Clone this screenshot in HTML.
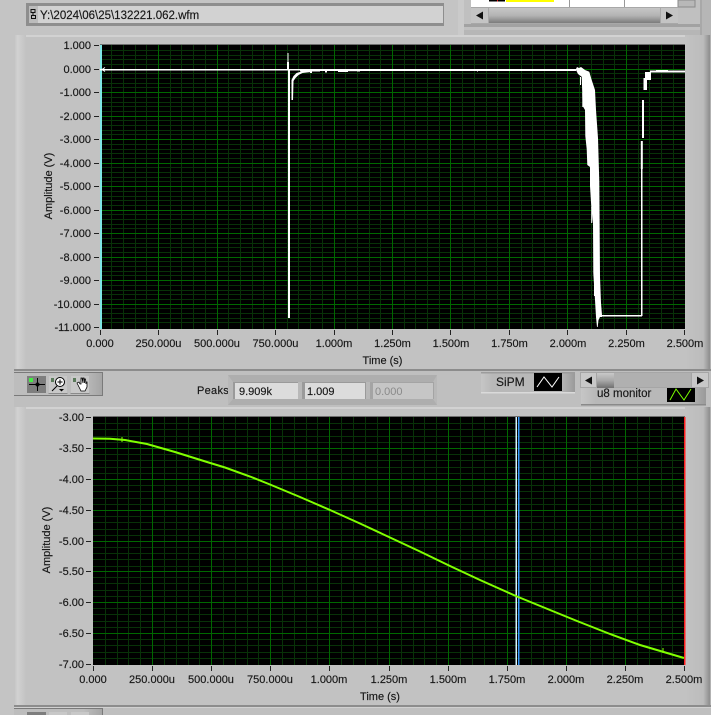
<!DOCTYPE html>
<html lang="en"><head><meta charset="utf-8"><title>Waveform viewer</title>
<style>
html,body{margin:0;padding:0;background:#c4c4c4;width:711px;height:715px;overflow:hidden}
svg{display:block;position:absolute;left:0;top:0}
text{font-family:"Liberation Sans",sans-serif;font-size:11px;fill:#161616;stroke:#161616;stroke-width:.15px}
.y{text-anchor:end}.x{text-anchor:middle}
</style></head><body>
<svg width="711" height="715" viewBox="0 0 711 715" xmlns="http://www.w3.org/2000/svg">
<defs>
<linearGradient id="lf" x1="0" x2="1" y1="0" y2="0"><stop offset="0" stop-color="#c2c2c2"/><stop offset=".3" stop-color="#d2d2d2"/><stop offset="1" stop-color="#c2c2c2"/></linearGradient>
<linearGradient id="rf" x1="0" x2="1" y1="0" y2="0"><stop offset="0" stop-color="#c2c2c2"/><stop offset=".7" stop-color="#bcbcbc"/><stop offset=".95" stop-color="#8e8e8e"/><stop offset="1" stop-color="#c8c8c8"/></linearGradient>
<linearGradient id="sb" x1="0" x2="0" y1="0" y2="1"><stop offset="0" stop-color="#c6c6c6"/><stop offset=".5" stop-color="#b4b4b4"/><stop offset="1" stop-color="#7c7c7c"/></linearGradient>
<linearGradient id="th" x1="0" x2="0" y1="0" y2="1"><stop offset="0" stop-color="#c8c8c8"/><stop offset=".5" stop-color="#a8a8a8"/><stop offset="1" stop-color="#707070"/></linearGradient>
<linearGradient id="tb" x1="0" x2="1" y1="0" y2="0"><stop offset="0" stop-color="#bdbdbd"/><stop offset=".78" stop-color="#bdbdbd"/><stop offset="1" stop-color="#a4a4a4"/></linearGradient>
<linearGradient id="lg" x1="0" x2="1" y1="0" y2="0"><stop offset="0" stop-color="#c6c6c6"/><stop offset=".12" stop-color="#b8b8b8"/><stop offset=".85" stop-color="#b8b8b8"/><stop offset="1" stop-color="#9a9a9a"/></linearGradient>
</defs>
<rect width="711" height="715" fill="#c4c4c4"/>

<!-- top path control -->
<rect x="26" y="3" width="418" height="23" fill="#8e8e8e"/>
<rect x="29" y="6" width="9" height="17" fill="#bcbcbc"/>
<rect x="38" y="6" width="405" height="17" fill="#d2d2d2"/>
<path d="M31 9.500h4v3h-4zM33 12.500v3M31.500 15.500h4v3h-4z" fill="none" stroke="#111" stroke-width="1"/>
<text x="40" y="19" style="font-size:11.5px">Y:\2024\06\25\132221.062.wfm</text>

<!-- top-right table cluster -->
<rect x="458" y="0" width="253" height="36" fill="#b6b6b6"/>
<rect x="458" y="0" width="6" height="36" fill="#cacaca"/>
<rect x="464" y="0" width="236" height="30" fill="#c0c0c0"/>
<rect x="464" y="24" width="236" height="3" fill="#a2a2a2"/>
<rect x="471" y="0" width="207" height="7" fill="#fff"/>
<rect x="489" y="0" width="16" height="1.500" fill="#000"/>
<rect x="497" y="0" width="1" height="1.500" fill="#e01010"/>
<rect x="506" y="0" width="48" height="2" fill="#ffff00"/>
<path d="M569.500 0v7M624.500 0v7" stroke="#999" stroke-width="1"/>
<rect x="678" y="0" width="17" height="7" fill="#b8b8b8" stroke="#8a8a8a"/>
<rect x="471" y="7" width="207" height="17" fill="#a8a8a8"/>
<rect x="471" y="8" width="17" height="15" fill="#c4c4c4"/>
<rect x="489" y="8" width="171" height="15" fill="url(#sb)"/>
<rect x="661" y="8" width="17" height="15" fill="#c4c4c4"/>
<path d="M476 15.500l7-4v8zM673 15.500l-7-4v8z" fill="#111"/>
<rect x="700" y="0" width="2" height="36" fill="#a8a8a8"/>

<!-- plot 1 frame -->
<rect x="14" y="35" width="697" height="335" fill="#c2c2c2"/>
<rect x="14" y="35" width="697" height="2" fill="#d2d2d2"/>
<rect x="14" y="35" width="12" height="335" fill="url(#lf)"/>
<rect x="685" y="35" width="26" height="335" fill="url(#rf)"/>
<rect x="14" y="369" width="697" height="2" fill="#8c8c8c"/>
<rect x="100" y="44" width="585" height="285" fill="#000"/>
<rect x="100" y="44" width="585" height="1" fill="#6e6e6e"/>
<path stroke="#083208" stroke-width="1" fill="none" d="M111.500 45V329M123.500 45V329M135.500 45V329M146.500 45V329M170.500 45V329M181.500 45V329M193.500 45V329M205.500 45V329M228.500 45V329M240.500 45V329M252.500 45V329M263.500 45V329M287.500 45V329M298.500 45V329M310.500 45V329M322.500 45V329M345.500 45V329M357.500 45V329M369.500 45V329M380.500 45V329M404.500 45V329M415.500 45V329M427.500 45V329M439.500 45V329M462.500 45V329M474.500 45V329M486.500 45V329M497.500 45V329M521.500 45V329M532.500 45V329M544.500 45V329M556.500 45V329M579.500 45V329M591.500 45V329M603.500 45V329M614.500 45V329M638.500 45V329M649.500 45V329M661.500 45V329M673.500 45V329
M100 50.500H685M100 55.500H685M100 59.500H685M100 64.500H685M100 73.500H685M100 78.500H685M100 83.500H685M100 87.500H685M100 97.500H685M100 102.500H685M100 106.500H685M100 111.500H685M100 120.500H685M100 125.500H685M100 130.500H685M100 134.500H685M100 144.500H685M100 149.500H685M100 153.500H685M100 158.500H685M100 167.500H685M100 172.500H685M100 177.500H685M100 181.500H685M100 191.500H685M100 196.500H685M100 200.500H685M100 205.500H685M100 214.500H685M100 219.500H685M100 224.500H685M100 228.500H685M100 238.500H685M100 243.500H685M100 247.500H685M100 252.500H685M100 261.500H685M100 266.500H685M100 271.500H685M100 275.500H685M100 285.500H685M100 290.500H685M100 294.500H685M100 299.500H685M100 308.500H685M100 313.500H685M100 318.500H685M100 322.500H685"/>
<path stroke="#006800" stroke-width="1" fill="none" d="M158.500 45V329M217.500 45V329M275.500 45V329M334.500 45V329M392.500 45V329M450.500 45V329M509.500 45V329M567.500 45V329M626.500 45V329
M100 69.500H685M100 92.500H685M100 116.500H685M100 139.500H685M100 163.500H685M100 186.500H685M100 210.500H685M100 233.500H685M100 257.500H685M100 280.500H685M100 304.500H685"/>
<rect x="100" y="45" width="2" height="284" fill="#7fe6e6"/>

<!-- top trace -->
<g fill="#fff" stroke="none">
<rect x="100" y="69" width="476" height="1.500"/>
<path d="M102 69.500l3-2M102 69.500l3 2" stroke="#fff" fill="none"/>
<rect x="287.500" y="53" width="1" height="17"/><rect x="287" y="62" width="2" height="8"/>
<rect x="288" y="70" width="2" height="248"/>
<path d="M290 100h1.500V80l2-4 3-3 5-1.500 8-1 2-.500v2l-9 1-4 2-3 3-2 3-.500 19h-3z"/>
<rect x="300" y="69" width="20" height="2.500"/><rect x="310" y="69" width="266" height="2"/>
<rect x="310" y="69" width="2" height="4"/><rect x="325" y="70" width="2" height="2.500"/><rect x="338" y="70" width="10" height="2"/><rect x="345" y="69" width="12" height="2.200"/>
<rect x="357" y="70" width="3" height="1.500"/><rect x="477" y="70" width="1" height="1.500"/>
<path d="M572 69L576 69L577 67L579 68L581 67L585 70L589.300 71.700L591.700 80L595 90L596 110L598 138L599.300 182L600 277L601 303L602 315L602 317L600 317L598.500 320L597.700 327L597 327L596 317L595 300L593.300 273L593 223L591.300 207L590 186L590 167L587.300 165L586.700 149L585.300 136L585 110L582.700 106L581.700 76.700L578 74L576 70Z"/>
<rect x="580" y="77" width="1" height="8"/>
<rect x="582.300" y="93" width="1" height="14"/>
<rect x="591.200" y="207" width="1" height="16"/>
<rect x="594" y="273" width="1" height="23"/>
<rect x="602" y="315" width="40" height="1.500"/>
<rect x="641" y="141" width="1.500" height="175"/>
<rect x="640.800" y="141" width="2" height="28"/>
<rect x="642" y="100" width="2" height="38"/>
<rect x="643.500" y="78" width="3.500" height="12"/>
<rect x="645" y="72" width="6" height="8"/>
<rect x="650" y="70.500" width="35" height="2"/>
<rect x="656" y="70" width="12" height="2.500"/>
</g>

<!-- y labels top -->
<text class="y" x="91" y="49">1.000</text><text class="y" x="91" y="73">0.000</text>
<text class="y" x="91" y="96">-1.000</text><text class="y" x="91" y="120">-2.000</text>
<text class="y" x="91" y="143">-3.000</text><text class="y" x="91" y="167">-4.000</text>
<text class="y" x="91" y="190">-5.000</text><text class="y" x="91" y="214">-6.000</text>
<text class="y" x="91" y="237">-7.000</text><text class="y" x="91" y="261">-8.000</text>
<text class="y" x="91" y="284">-9.000</text><text class="y" x="91" y="308">-10.000</text>
<text class="y" x="91" y="331">-11.000</text>
<path stroke="#222" stroke-width="1" fill="none" d="M94 45.500h5M94 69.500h5M94 92.500h5M94 116.500h5M94 139.500h5M94 163.500h5M94 186.500h5M94 210.500h5M94 233.500h5M94 257.500h5M94 280.500h5M94 304.500h5M94 327.500h5
M100.500 330v5M158.500 330v5M217.500 330v5M275.500 330v5M334.500 330v5M392.500 330v5M450.500 330v5M509.500 330v5M567.500 330v5M626.500 330v5M684.500 330v5"/>
<text class="x" x="100" y="347">0.000</text><text class="x" x="158.500" y="347">250.000u</text>
<text class="x" x="217" y="347">500.000u</text><text class="x" x="275.500" y="347">750.000u</text>
<text class="x" x="334" y="347">1.000m</text><text class="x" x="392.500" y="347">1.250m</text>
<text class="x" x="451" y="347">1.500m</text><text class="x" x="509.500" y="347">1.750m</text>
<text class="x" x="568" y="347">2.000m</text><text class="x" x="626.500" y="347">2.250m</text>
<text class="x" x="685" y="347">2.500m</text>
<text class="x" x="382.500" y="364">Time (s)</text>
<text class="x" transform="translate(52 186) rotate(-90)">Amplitude (V)</text>

<!-- middle band -->
<rect x="0" y="371" width="711" height="36" fill="#bfbfbf"/>
<rect x="0" y="0" width="14" height="715" fill="#c4c4c4"/>
<rect x="14" y="372" width="89" height="24" fill="url(#tb)"/>
<path d="M14 372.500h88M102.500 372v24M14 395.500h88" stroke="#7a7a7a" fill="none"/>
<rect x="27" y="376" width="19" height="17" fill="#7e7e7e"/>
<rect x="49" y="376" width="18" height="17" fill="#c8c8c8"/><rect x="71" y="376" width="18" height="17" fill="#c8c8c8"/>
<path d="M48.500 393.500h19M70.500 393.500h19" stroke="#8a8a8a"/>
<path d="M37.500 378v13M29 384.500h16" stroke="#000"/><circle cx="37.500" cy="384.500" r="1.500" fill="none" stroke="#000"/>
<rect x="29" y="378" width="4" height="4" fill="#44ee44"/>
<rect x="51" y="378" width="3" height="4" fill="#5a7a5a"/><rect x="73" y="378" width="3" height="4" fill="#5a7a5a"/>
<circle cx="60" cy="382" r="4.500" fill="#fff" stroke="#000"/><path d="M57.500 382h5M60 379.500v5M57 386l-5 5" stroke="#000" fill="none"/><path d="M59 389h5l-2.500 2.500z" fill="#000"/>
<path d="M77 383l2 4 2 4h4l2-4v-5l-1 0v2l-.500-5-1 0v4l-.500-5-1 0v5l-1-5-1 0v6l-1 0-1-2z" fill="#fff" stroke="#000" stroke-width=".8"/>

<text x="197" y="394" style="letter-spacing:.3px">Peaks</text>
<rect x="228" y="375" width="209" height="30" fill="#b8b8b8"/>
<path d="M228 375h209l-4 7H233zM228 405h209l-4-6H233z" fill="#aeaeae"/>
<rect x="233" y="382" width="65" height="17" fill="#9a9a9a"/><rect x="235" y="383" width="63" height="16" fill="#dcdcdc"/>
<rect x="302" y="382" width="64" height="17" fill="#9a9a9a"/><rect x="305" y="383" width="60" height="16" fill="#dcdcdc"/>
<rect x="370" y="382" width="64" height="17" fill="#a4a4a4"/><rect x="373" y="383" width="60" height="16" fill="#c6c6c6"/>
<text x="239" y="395">9.909k</text><text x="307" y="395">1.009</text><text x="375" y="395" style="fill:#8a8a8a;stroke:none">0.000</text>

<!-- legend / scrollbar -->
<rect x="481" y="372" width="94" height="21" fill="url(#lg)"/>
<rect x="481" y="372" width="94" height="1.500" fill="#9c9c9c"/><rect x="481" y="392" width="94" height="1.500" fill="#dadada"/>
<text x="496" y="386" style="font-size:12px">SiPM</text>
<rect x="534" y="373" width="28" height="18" fill="#000"/>
<path d="M537 387l7-10 8 10 7-10" stroke="#fff" fill="none"/>
<rect x="581" y="388" width="125" height="17" fill="url(#lg)"/><rect x="581" y="404" width="125" height="1.500" fill="#8a8a8a"/>
<text x="597" y="397" style="font-size:11.500px">u8 monitor</text>
<rect x="667" y="388" width="28" height="14" fill="#000"/>
<path d="M670 400l6-11 8 11 7-11" stroke="#7cff00" fill="none"/>
<rect x="580" y="372" width="129" height="16" fill="#a6a6a6"/>
<rect x="581" y="373" width="15" height="14" fill="#c8c8c8"/>
<rect x="597" y="373" width="17" height="15" fill="url(#th)"/>
<rect x="614" y="373" width="77" height="14" fill="#b0b0b0"/>
<rect x="692" y="373" width="16" height="14" fill="#c8c8c8"/>
<path d="M585 380.500l7-4v8zM704 380.500l-7-4v8z" fill="#111"/>

<!-- plot 2 frame -->
<rect x="14" y="407" width="697" height="298" fill="#c2c2c2"/>
<rect x="14" y="407" width="697" height="2" fill="#d2d2d2"/>
<rect x="14" y="407" width="12" height="298" fill="url(#lf)"/>
<rect x="685" y="407" width="26" height="298" fill="url(#rf)"/>
<rect x="93" y="416" width="592" height="249" fill="#000"/>
<rect x="93" y="416" width="592" height="1" fill="#6e6e6e"/>
<path stroke="#083208" stroke-width="1" fill="none" d="M105.500 417V665M117.500 417V665M128.500 417V665M140.500 417V665M164.500 417V665M176.500 417V665M188.500 417V665M199.500 417V665M223.500 417V665M235.500 417V665M247.500 417V665M258.500 417V665M282.500 417V665M294.500 417V665M306.500 417V665M317.500 417V665M341.500 417V665M353.500 417V665M365.500 417V665M377.500 417V665M401.500 417V665M413.500 417V665M424.500 417V665M436.500 417V665M460.500 417V665M472.500 417V665M484.500 417V665M495.500 417V665M531.500 417V665M543.500 417V665M554.500 417V665M578.500 417V665M590.500 417V665M602.500 417V665M613.500 417V665M637.500 417V665M649.500 417V665M661.500 417V665M672.500 417V665
M93 423.500H685M93 429.500H685M93 436.500H685M93 442.500H685M93 454.500H685M93 460.500H685M93 467.500H685M93 473.500H685M93 485.500H685M93 491.500H685M93 498.500H685M93 504.500H685M93 516.500H685M93 522.500H685M93 529.500H685M93 535.500H685M93 547.500H685M93 553.500H685M93 559.500H685M93 566.500H685M93 577.500H685M93 583.500H685M93 590.500H685M93 596.500H685M93 608.500H685M93 614.500H685M93 621.500H685M93 627.500H685M93 639.500H685M93 645.500H685M93 652.500H685M93 658.500H685"/>
<path stroke="#006800" stroke-width="1" fill="none" d="M152.500 417V665M211.500 417V665M270.500 417V665M329.500 417V665M389.500 417V665M448.500 417V665M507.500 417V665M566.500 417V665M625.500 417V665
M93 448.500H685M93 479.500H685M93 510.500H685M93 541.500H685M93 571.500H685M93 602.500H685M93 633.500H685"/>
<rect x="515.500" y="417" width="1.500" height="248" fill="#d8f6ff"/>
<rect x="518" y="417" width="1.500" height="248" fill="#3a9cff"/>
<rect x="684" y="417" width="1.500" height="248" fill="#ff2020"/>
<path d="M93 438.500L110 438.700L125 440L147 444L175 452L207 462L225 467.500L250 476.500L270 484.500L300 497L330 510L360 523.500L390 537.500L420 551.500L450 566L480 580L517 596.500L550 610L577 621L610 634L640 645L684 658" stroke="#80ff00" stroke-width="2" fill="none"/>
<path d="M663 648v5M122 437v5" stroke="#80ff00"/>

<text class="y" x="84" y="421">-3.00</text><text class="y" x="84" y="452">-3.50</text>
<text class="y" x="84" y="483">-4.00</text><text class="y" x="84" y="514">-4.50</text>
<text class="y" x="84" y="545">-5.00</text><text class="y" x="84" y="575">-5.50</text>
<text class="y" x="84" y="606">-6.00</text><text class="y" x="84" y="637">-6.50</text>
<text class="y" x="84" y="668">-7.00</text>
<path stroke="#222" stroke-width="1" fill="none" d="M86 417.500h5M86 448.500h5M86 479.500h5M86 510.500h5M86 541.500h5M86 571.500h5M86 602.500h5M86 633.500h5M86 664.500h5
M93.500 666v5M152.500 666v5M211.500 666v5M270.500 666v5M329.500 666v5M389.500 666v5M448.500 666v5M507.500 666v5M566.500 666v5M625.500 666v5M684.500 666v5"/>
<text class="x" x="93" y="683">0.000</text><text class="x" x="152" y="683">250.000u</text>
<text class="x" x="211" y="683">500.000u</text><text class="x" x="270" y="683">750.000u</text>
<text class="x" x="329" y="683">1.000m</text><text class="x" x="389" y="683">1.250m</text>
<text class="x" x="448" y="683">1.500m</text><text class="x" x="507" y="683">1.750m</text>
<text class="x" x="566" y="683">2.000m</text><text class="x" x="625" y="683">2.250m</text>
<text class="x" x="684" y="683">2.500m</text>
<text class="x" x="380" y="700">Time (s)</text>
<text class="x" transform="translate(50 540) rotate(-90)">Amplitude (V)</text>

<!-- bottom band -->
<rect x="14" y="705" width="697" height="2" fill="#8c8c8c"/>
<rect x="14" y="707" width="697" height="8" fill="#bfbfbf"/>
<rect x="14" y="707" width="697" height="1" fill="#d0d0d0"/>
<rect x="14" y="708" width="89" height="7" fill="url(#tb)"/>
<path d="M14 708.500h88M102.500 708v7" stroke="#7a7a7a" fill="none"/>
<rect x="27" y="712" width="19" height="3" fill="#7e7e7e"/><rect x="49" y="712" width="18" height="3" fill="#c8c8c8"/><rect x="71" y="712" width="18" height="3" fill="#c8c8c8"/>
</svg>
</body></html>
